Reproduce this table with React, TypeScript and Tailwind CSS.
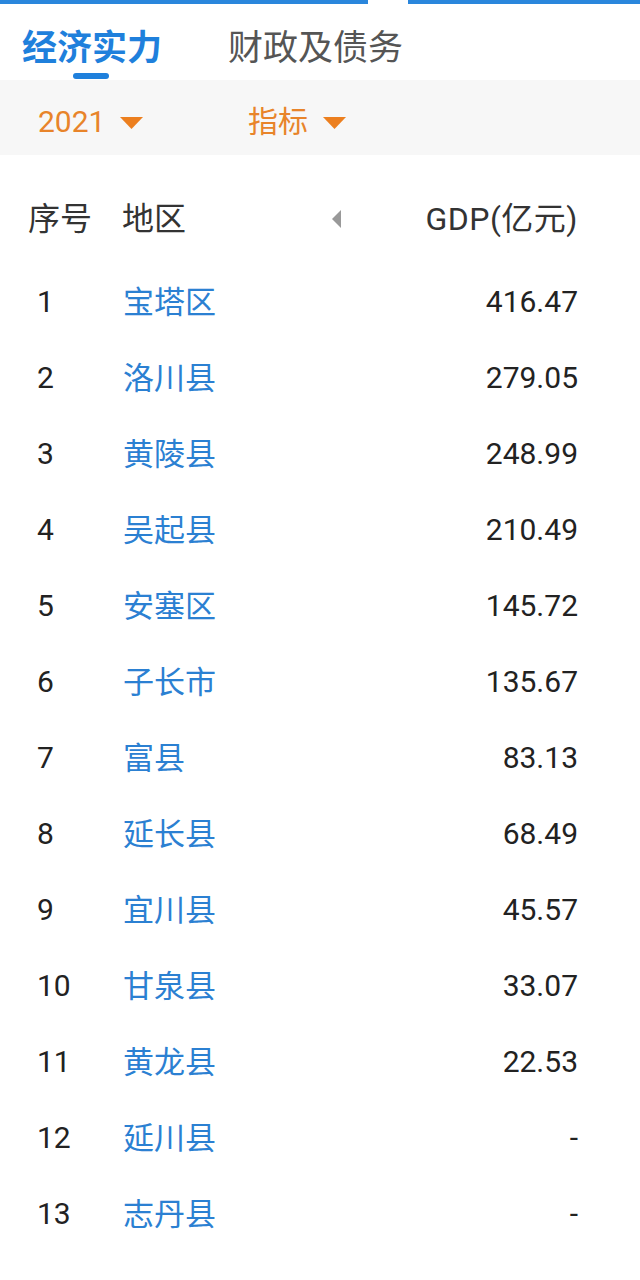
import React from "react";

const rows: [number, string, string][] = [
  [1, "宝塔区", "416.47"],
  [2, "洛川县", "279.05"],
  [3, "黄陵县", "248.99"],
  [4, "吴起县", "210.49"],
  [5, "安塞区", "145.72"],
  [6, "子长市", "135.67"],
  [7, "富县", "83.13"],
  [8, "延长县", "68.49"],
  [9, "宜川县", "45.57"],
  [10, "甘泉县", "33.07"],
  [11, "黄龙县", "22.53"],
  [12, "延川县", "-"],
  [13, "志丹县", "-"],
];

const Caret = () => (
  <svg width="23" height="12" viewBox="0 0 23 12" className="ml-[15px] mt-[2px]">
    <path d="M0 0 H23 L11.5 12 Z" fill="#ec7f1f" />
  </svg>
);

export default function App() {
  return (
    <div
      className="w-[640px] h-[1280px] bg-white overflow-hidden"
      style={{ fontFamily: "Roboto, 'Noto Sans CJK SC', sans-serif" }}
    >
      {/* top strip */}
      <div className="flex h-[4px]">
        <div className="w-[368px] bg-[#2a86dc]" />
        <div className="w-[40px] bg-white" />
        <div className="flex-1 bg-[#2a86dc]" />
      </div>

      {/* tabs */}
      <div className="flex h-[76px] pl-[22px]">
        <div className="relative flex items-center h-full pt-[12px]">
          <span className="text-[35px] leading-none font-bold text-[#1f80dc]">经济实力</span>
          <div className="absolute left-[51px] bottom-[1px] w-[36px] h-[6px] rounded-full bg-[#1f80dc]" />
        </div>
        <div className="flex items-center h-full pt-[12px] ml-[66px]">
          <span className="text-[35px] leading-none text-[#555555]">财政及债务</span>
        </div>
      </div>

      {/* filters */}
      <div className="flex items-center h-[75px] bg-[#f7f7f7] pl-[38px] pt-[9px]">
        <div className="flex items-center w-[210px]">
          <span className="text-[30px] leading-none text-[#e8842a]">2021</span>
          <Caret />
        </div>
        <div className="flex items-center">
          <span className="text-[30px] leading-none text-[#e8842a]">指标</span>
          <Caret />
        </div>
      </div>

      {/* header */}
      <div className="flex items-center h-[76px] mt-[26px] text-[32px] leading-none text-[#333333]">
        <div className="w-[122px] pl-[28px]">序号</div>
        <div className="w-[210px]">地区</div>
        <svg width="9" height="18" viewBox="0 0 9 18">
          <path d="M9 0 V18 L0 9 Z" fill="#999999" />
        </svg>
        <div className="flex-1 text-right pr-[62px] tracking-[0.5px]">GDP(亿元)</div>
      </div>

      {/* rows */}
      <div className="mt-[7px]">
        {rows.map(([n, name, v]) => (
          <div key={n} className="flex items-center h-[76px] text-[30px] leading-none">
            <div className="w-[123px] pl-[37px] text-[#222222]">{n}</div>
            <div className="flex-1 text-[31px] text-[#2b80d2]">{name}</div>
            <div className="text-right pr-[62px] text-[#222222]">{v}</div>
          </div>
        ))}
      </div>
    </div>
  );
}
